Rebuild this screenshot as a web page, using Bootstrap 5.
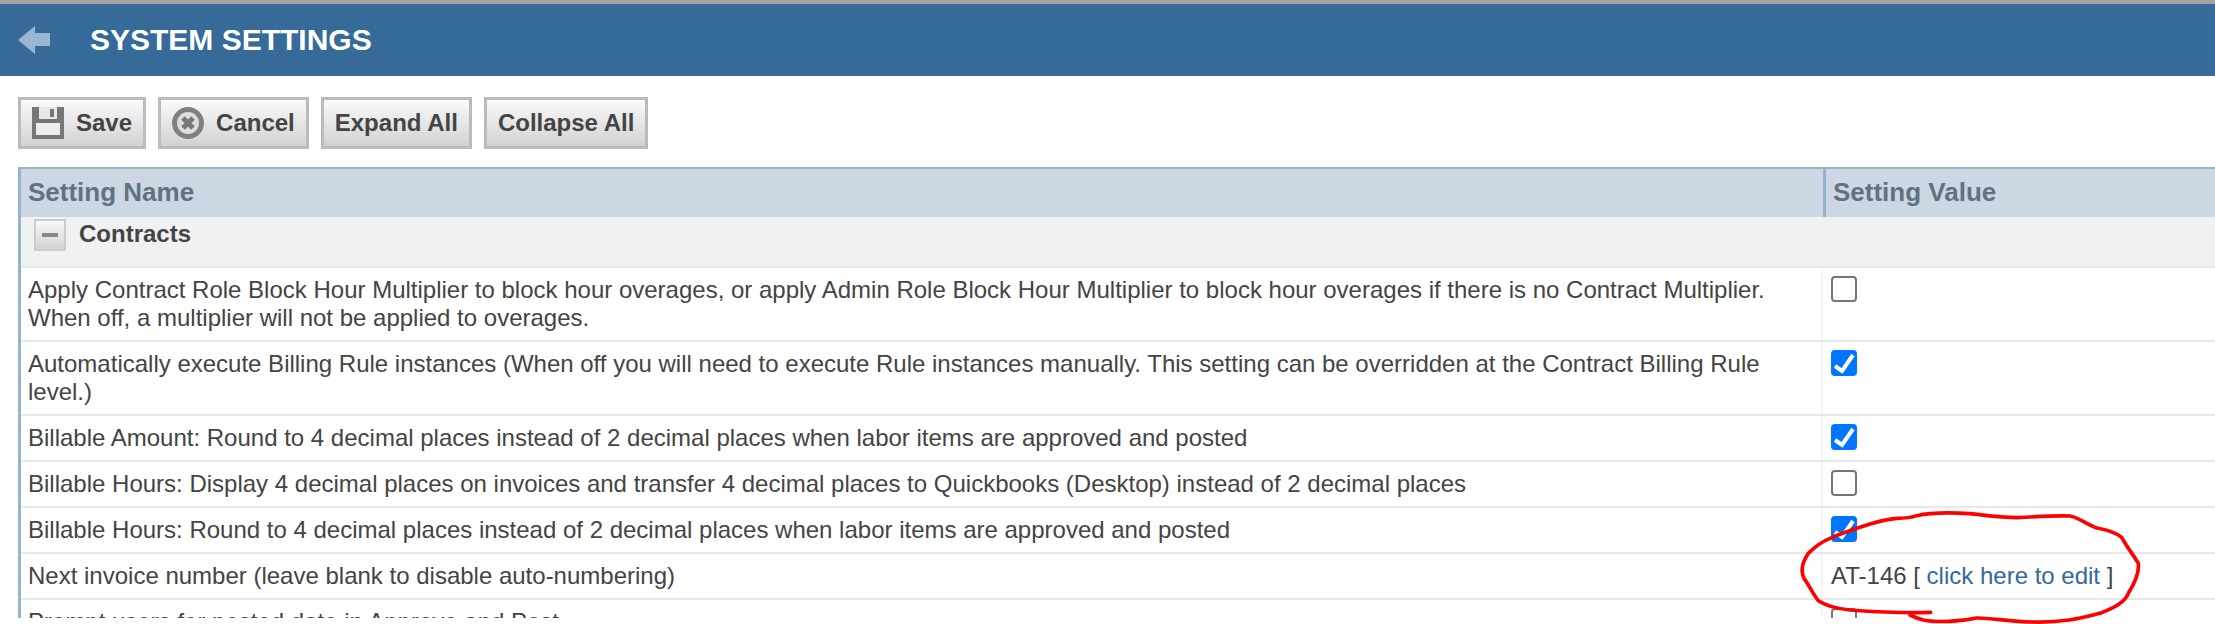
<!DOCTYPE html>
<html lang="en">
<head>
    <meta charset="UTF-8">
    <meta name="viewport" content="width=device-width, initial-scale=1.0">
    <title>System Settings</title>
    <link href="https://cdn.jsdelivr.net/npm/bootstrap@5.3.2/dist/css/bootstrap.min.css" rel="stylesheet">
    <style>
        html, body { height: 100%; overflow: hidden; background: #fff; }
        body { font-family: "Liberation Sans", Arial, sans-serif; color: #444; }
        .top-strip { height: 4px; background: #a3a3a3; }
        .title-bar { height: 72px; background: #356a99; padding-left: 18px; }
        .title-bar h1 { margin: 0 0 0 40px; font-size: 30px; font-weight: 700; color: #fff; }
        .tool-row { padding: 21px 0 18px 18px; gap: 12px; }
        .tool-btn {
            height: 52px; padding: 0 11px; gap: 12px;
            font-size: 24px; font-weight: 700; color: #444;
            border: 3px solid #bbb; border-radius: 0;
            background: linear-gradient(#fafafa, #d2d2d2);
        }
        .tool-btn:hover { color: #444; border-color: #bbb; }
        .grid-wrap { height: 451px; margin-left: 18px; overflow: hidden; border-left: 3px solid #94b3cc; border-top: 2px solid #94b3cc; }
        .grid-head { height: 48px; background: #cbd8e3; font-size: 26px; font-weight: 700; color: #5f7280; }
        .head-name { width: 1805px; padding-left: 7px; padding-bottom: 2px; border-right: 3px solid #94b3cc; }
        .head-value { padding-left: 7px; padding-bottom: 2px; }
        .grid-table { table-layout: fixed; width: 2194px; margin: 0; font-size: 24px; line-height: 28px; }
        .grid-table td { padding: 8px 7px; color: #444; border-bottom: 2px solid #e8e8e8; vertical-align: top; }
        .grid-table .name-col { border-right: 2px solid #f6f6f6; }
        .grid-table .first-col { width: 1801px; }
        .grid-table td.value-col { padding-left: 8px; }
        .grid-table tr.group-row td { height: 50px; padding: 2px 0 0 13px; background: #f1f1f1; border-right: 0; font-size: 24px; font-weight: 700; }
        .group-label { padding: 1px 0 0 1px; }
        .minus-box { width: 32px; height: 32px; border: 2px solid #ccc; background: linear-gradient(#f8f8f8, #d4d4d4); }
        .minus-box span { width: 16px; height: 4px; background: #888; }
        .form-check-input.value-check { display: block; width: 26px; height: 26px; margin: 0; border: 2px solid #767676; border-radius: 4px; }
        .form-check-input.value-check:checked {
            background-color: #0075ff; border-color: #0075ff; background-size: 100% 100%;
            background-image: url("data:image/svg+xml,%3csvg xmlns='http://www.w3.org/2000/svg' viewBox='0 0 22 22'%3e%3cpath fill='none' stroke='%23fff' stroke-width='4' d='M2 14l7 5L20 3'/%3e%3c/svg%3e");
        }
        .grid-table a { color: #36689a; text-decoration: none; }
        .red-scribble { position: absolute; left: 1750px; top: 440px; }
    </style>
</head>
<body>
<div class="top-strip"></div>
<div class="title-bar d-flex align-items-center">
    <svg width="32" height="28" viewBox="0 0 32 28"><path d="M0 14 17 0V7H32V20H17V28Z" fill="#9ab6d0"/></svg>
    <h1>SYSTEM SETTINGS</h1>
</div>

<div class="tool-row d-flex">
    <button type="button" class="btn tool-btn d-flex align-items-center">
        <svg width="32" height="32" viewBox="0 0 32 32"><path d="M0 0H32V32H0Z" fill="#777"/><path d="M4 16H28V28H4Z" fill="#eee"/><path d="M7 0H25V12H7Z" fill="#e8e8e8"/><path d="M18 2H22V10H18Z" fill="#777"/></svg>
        Save
    </button>
    <button type="button" class="btn tool-btn d-flex align-items-center">
        <svg width="32" height="32" viewBox="0 0 32 32"><circle cx="16" cy="16" r="13.5" fill="#ddd" stroke="#808080" stroke-width="5"/><path d="M11 11 21 21M21 11 11 21" stroke="#777" stroke-width="5"/></svg>
        Cancel
    </button>
    <button type="button" class="btn tool-btn">Expand All</button>
    <button type="button" class="btn tool-btn">Collapse All</button>
</div>

<div class="grid-wrap">
    <div class="grid-head d-flex align-items-center">
        <div class="head-name h-100 d-flex align-items-center">Setting Name</div>
        <div class="head-value">Setting Value</div>
    </div>
    <table class="grid-table">
        <colgroup><col class="first-col"><col></colgroup>
        <tbody>
        <tr class="group-row">
            <td colspan="2">
                <div class="d-flex align-items-start gap-2">
                    <div class="minus-box d-flex align-items-center justify-content-center me-1"><span></span></div>
                    <div class="group-label">Contracts</div>
                </div>
            </td>
        </tr>
        <tr>
            <td class="name-col">Apply Contract Role Block Hour Multiplier to block hour overages, or apply Admin Role Block Hour Multiplier to block hour overages if there is no Contract Multiplier. When off, a multiplier will not be applied to overages.</td>
            <td class="value-col"><input type="checkbox" class="form-check-input value-check"></td>
        </tr>
        <tr>
            <td class="name-col">Automatically execute Billing Rule instances (When off you will need to execute Rule instances manually. This setting can be overridden at the Contract Billing Rule level.)</td>
            <td class="value-col"><input type="checkbox" class="form-check-input value-check" checked></td>
        </tr>
        <tr>
            <td class="name-col">Billable Amount: Round to 4 decimal places instead of 2 decimal places when labor items are approved and posted</td>
            <td class="value-col"><input type="checkbox" class="form-check-input value-check" checked></td>
        </tr>
        <tr>
            <td class="name-col">Billable Hours: Display 4 decimal places on invoices and transfer 4 decimal places to Quickbooks (Desktop) instead of 2 decimal places</td>
            <td class="value-col"><input type="checkbox" class="form-check-input value-check"></td>
        </tr>
        <tr>
            <td class="name-col">Billable Hours: Round to 4 decimal places instead of 2 decimal places when labor items are approved and posted</td>
            <td class="value-col"><input type="checkbox" class="form-check-input value-check" checked></td>
        </tr>
        <tr>
            <td class="name-col">Next invoice number (leave blank to disable auto-numbering)</td>
            <td class="value-col">AT-146 [ <a href="#">click here to edit</a> ]</td>
        </tr>
        <tr>
            <td class="name-col">Prompt users for posted date in Approve and Post</td>
            <td class="value-col"><input type="checkbox" class="form-check-input value-check"></td>
        </tr>
        </tbody>
    </table>
</div>

<!-- red marker circle drawn over the screenshot -->
<svg class="red-scribble" width="465" height="184" viewBox="0 0 1395 552" fill="none">
    <path d="M542 517C480 519 400 517 300 510C260 506 225 495 205 482C190 465 180 440 162 415C152 395 155 370 175 340C195 320 215 305 240 295C270 282 300 272 330 262C370 248 400 238 440 235C465 235 480 235 500 227C540 218 600 217 660 221C700 225 750 233 800 233C850 230 920 226 960 228C985 232 1005 250 1040 264C1075 270 1100 280 1115 292C1130 320 1150 345 1165 370C1168 395 1160 420 1135 460C1125 485 1100 500 1050 520C1000 532 950 548 850 546C780 545 720 533 680 534C630 545 560 548 520 540C500 535 490 530 480 525" stroke="#f00" stroke-width="11" stroke-linecap="round" stroke-linejoin="round"/>
</svg>

<script src="https://cdn.jsdelivr.net/npm/bootstrap@5.3.2/dist/js/bootstrap.bundle.min.js"></script>
</body>
</html>
